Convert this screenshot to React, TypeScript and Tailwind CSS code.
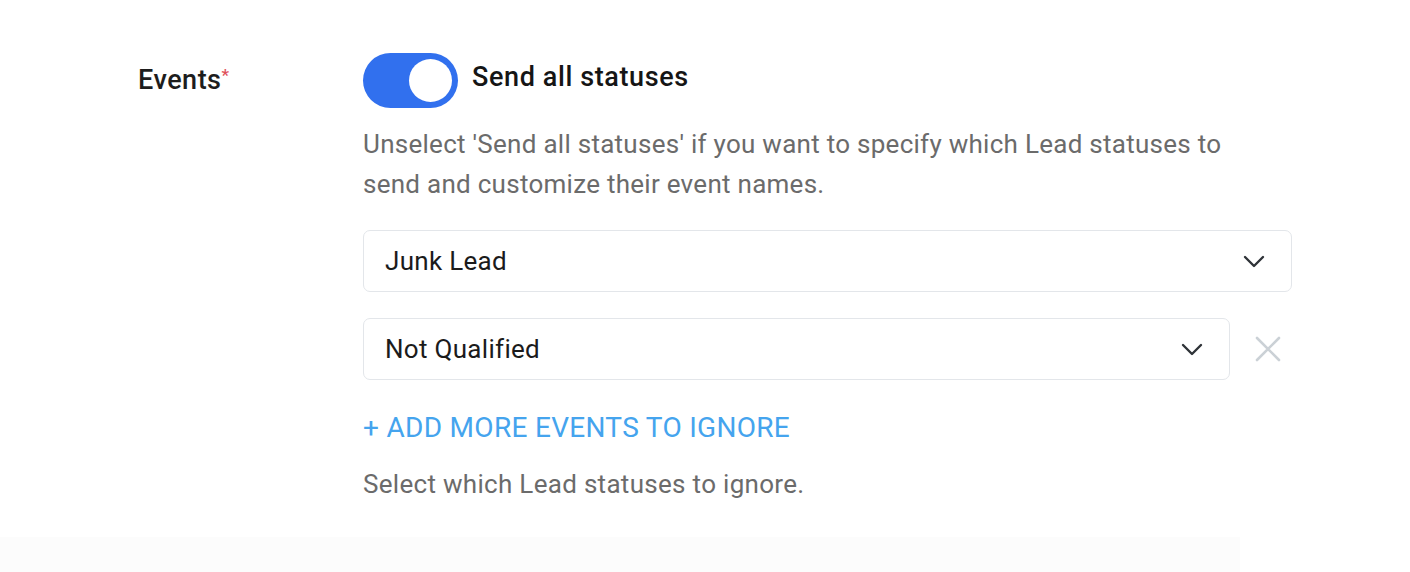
import React from "react";

const Chevron = () => (
  <svg width="22" height="13" viewBox="0 0 22 13" fill="none">
    <path d="M2 2l9 9 9-9" stroke="#2f3338" strokeWidth="2.4" strokeLinecap="round" strokeLinejoin="round" />
  </svg>
);

const Select = ({ value }: { value: string }) => (
  <div className="flex h-[62px] flex-1 items-center justify-between rounded-[7px] border border-[#e3e6ea] bg-white pl-[21px] pr-[26px]">
    <span className="text-[26px] tracking-[0.3px] text-[#1b1b1b]">{value}</span>
    <Chevron />
  </div>
);

const App = () => {
  return (
    <div className="flex h-[572px] w-[1410px] flex-col bg-white font-['Roboto',sans-serif]">
      <div className="flex pl-[138px] pt-[53px]">
        <div className="w-[225px] pt-[9px]">
          <span className="text-[27px] font-medium leading-[36px] tracking-[0.5px] text-[#1d1d1d]">
            Events
            <sup className="relative -top-[8px] text-[17px] text-[#e0505a]">*</sup>
          </span>
        </div>

        <div className="flex w-[929px] flex-col">
          <div className="flex items-center">
            <div className="flex h-[55px] w-[95px] items-center justify-end rounded-full bg-[#3170ee] pr-[6px]">
              <div className="h-[43px] w-[43px] rounded-full bg-white" />
            </div>
            <span className="ml-[14px] -mt-[6px] text-[27px] font-medium tracking-[0.6px] text-[#151515]">
              Send all statuses
            </span>
          </div>

          <p className="mt-[16px] w-[880px] text-[26px] leading-[40px] tracking-[0.27px] text-[#6b6b6b]">
            Unselect 'Send all statuses' if you want to specify which Lead statuses to send and customize their event names.
          </p>

          <div className="mt-[26px] flex">
            <Select value="Junk Lead" />
          </div>

          <div className="mt-[26px] flex items-center pr-[11px]">
            <Select value="Not Qualified" />
            <svg className="ml-[25px]" width="26" height="26" viewBox="0 0 26 26" fill="none">
              <path d="M2 2l22 22M24 2L2 24" stroke="#cbd1d6" strokeWidth="2.6" strokeLinecap="round" />
            </svg>
          </div>

          <button className="mt-[28px] self-start text-[28px] leading-[40px] tracking-[0.3px] text-[#45a4ee]">
            + ADD MORE EVENTS TO IGNORE
          </button>

          <p className="mt-[18px] text-[26px] leading-[36px] tracking-[0.3px] text-[#6b6b6b]">
            Select which Lead statuses to ignore.
          </p>
        </div>
      </div>

      <div className="mt-auto h-[35px] w-[1240px] bg-[#fcfcfc]" />
    </div>
  );
};

export default App;
